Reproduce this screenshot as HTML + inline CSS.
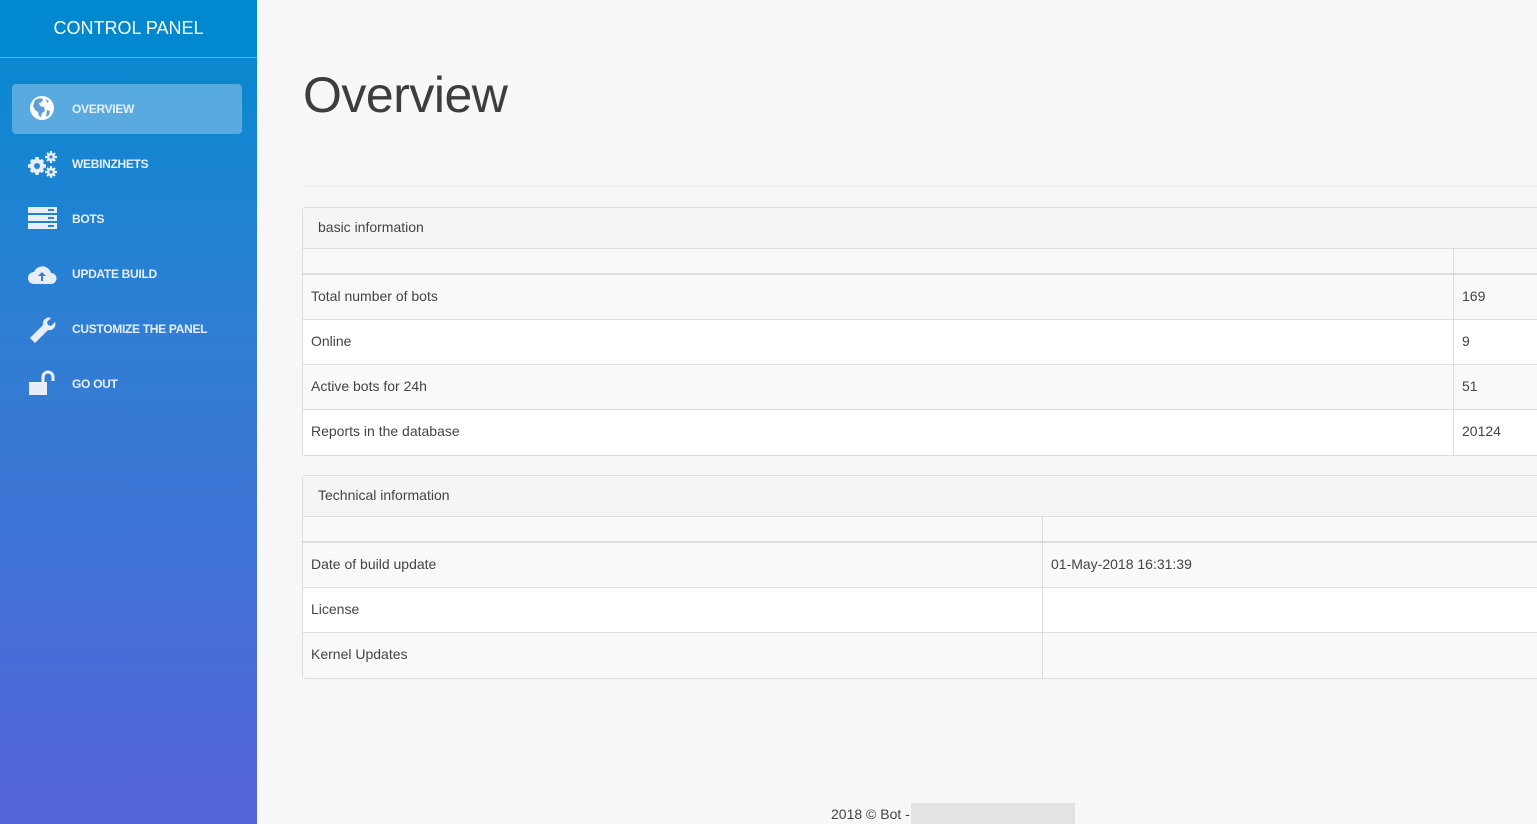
<!DOCTYPE html>
<html><head><meta charset="utf-8"><style>
*{box-sizing:border-box;margin:0;padding:0}
body{width:1537px;height:824px;overflow:hidden;background:#f7f7f9;font-family:"Liberation Sans",Roboto,sans-serif;position:relative}
.sb{position:absolute;left:0;top:0;width:257px;height:824px;background:linear-gradient(#0289cf 0%,#2f7fd4 40%,#5563d8 100%)}
.brand{height:58px;border-bottom:1px solid rgba(255,255,255,.35);color:#fff;font-size:18px;text-align:center;line-height:56px;background:#0288ce}
.nav{position:absolute;left:12px;width:230px;height:50px;border-radius:4px;color:#e8eef8;font-weight:bold;font-size:12px;letter-spacing:-.3px}
.nav.act{background:rgba(255,255,255,.3)}
.nav span{position:absolute;left:60px;top:18px}
.nav svg{position:absolute;left:14px;top:10px}
h1{position:absolute;left:303px;top:66px;font-size:50px;font-weight:normal;color:#3d3d3d;letter-spacing:-.5px}
.hr{position:absolute;left:303px;top:186px;right:0;border-top:1px solid #eaeaea}
.card{position:absolute;left:302px;right:-5px;border:1px solid #ddd;border-radius:3px;background:#fff;color:#444;font-size:14px}
.ch{height:41px;background:#f5f5f5;border-bottom:1px solid #ddd;padding:11px 15px}
.r{display:flex;height:45px;border-bottom:1px solid #ddd;background:#fff}
.r:nth-child(even){background:#f9f9f9}
.r div{padding:13px 8px}
.r div:first-child{border-right:1px solid #ddd}
.r.e{height:26px;border-bottom:2px solid #ddd;background:#f9f9f9}
.r:last-child{border-bottom:none}
.foot{position:absolute;left:831px;top:806px;font-size:14px;color:#444}
.blur{position:absolute;left:911px;top:803px;width:164px;height:21px;background:#e3e3e5}
</style></head><body>
<div class="sb">
<div class="brand">CONTROL PANEL</div>
<div class="nav act" style="top:84px"><svg width="30" height="30" viewBox="0 0 30 30"><circle cx="16" cy="14" r="12" fill="#fff"/><path d="M9 6c3-2 6-2 8-1l-1 3-3 1 1 3 4 1 1 4-3 2-1 4-2-1-1-4-3-2-2-4z M21 16l3 1-1 4-3 2z M20 5l3 2-2 2z" fill="#5f9fd6"/></svg><span>OVERVIEW</span></div>
<div class="nav" style="top:139px"><svg width="34" height="30" viewBox="0 0 34 30"><g fill="#e8eef8"><circle cx="11" cy="17" r="7"/><g stroke="#e8eef8" stroke-width="3.5"><path d="M11 8v18M2 17h18M5 11l12 12M17 11L5 23"/></g><circle cx="25" cy="8" r="4"/><g stroke="#e8eef8" stroke-width="2.2"><path d="M25 2v12M19 8h12M21 4l8 8M29 4l-8 8"/></g><circle cx="25" cy="23" r="4"/><g stroke="#e8eef8" stroke-width="2.2"><path d="M25 17v12M19 23h12M21 19l8 8M29 19l-8 8"/></g></g><circle cx="11" cy="17" r="3" fill="#2a86d2"/><circle cx="25" cy="8" r="1.6" fill="#2a86d2"/><circle cx="25" cy="23" r="1.6" fill="#2a86d2"/></svg><span>WEBINZHETS</span></div>
<div class="nav" style="top:194px"><svg width="32" height="30" viewBox="0 0 32 30"><rect x="2" y="3" width="29" height="6" fill="#e8eef8"/><rect x="2" y="11" width="29" height="6" fill="#e8eef8"/><rect x="2" y="19" width="29" height="6" fill="#e8eef8"/><rect x="22" y="5" width="6" height="2" fill="#2e80d2"/><rect x="22" y="13" width="6" height="2" fill="#2e80d2"/><rect x="22" y="21" width="6" height="2" fill="#2e80d2"/></svg><span>BOTS</span></div>
<div class="nav" style="top:249px"><svg width="32" height="30" viewBox="0 0 32 30"><path d="M8 25a6 6 0 0 1 0-12 9 9 0 0 1 17 1 5.5 5.5 0 0 1 0 11z" fill="#e8eef8"/><path d="M16 13l-4 4h3v5h2v-5h3z" fill="#3a7ad2"/></svg><span>UPDATE BUILD</span></div>
<div class="nav" style="top:304px"><svg width="32" height="30" viewBox="0 0 32 30"><path d="M4 24l13-13a6 6 0 0 1 8-7l-4 4 1 3 3 1 4-4a6 6 0 0 1-7 8l-13 13z" fill="#e8eef8"/></svg><span>CUSTOMIZE THE PANEL</span></div>
<div class="nav" style="top:359px"><svg width="32" height="30" viewBox="0 0 32 30"><rect x="3" y="13" width="18" height="13" fill="#e8eef8"/><path d="M17 13v-5a5 5 0 0 1 10 0v4" stroke="#e8eef8" stroke-width="3" fill="none"/></svg><span>GO OUT</span></div>
</div>
<h1>Overview</h1>
<div class="hr"></div>
<div class="card" style="top:207px">
<div class="ch">basic information</div>
<div>
<div class="r e"><div style="width:1151px"></div><div></div></div>
<div class="r"><div style="width:1151px">Total number of bots</div><div>169</div></div>
<div class="r"><div style="width:1151px">Online</div><div>9</div></div>
<div class="r"><div style="width:1151px">Active bots for 24h</div><div>51</div></div>
<div class="r"><div style="width:1151px">Reports in the database</div><div>20124</div></div>
</div></div>
<div class="card" style="top:475px">
<div class="ch">Technical information</div>
<div>
<div class="r e"><div style="width:740px"></div><div></div></div>
<div class="r"><div style="width:740px">Date of build update</div><div>01-May-2018 16:31:39</div></div>
<div class="r"><div style="width:740px">License</div><div></div></div>
<div class="r"><div style="width:740px">Kernel Updates</div><div></div></div>
</div></div>
<div class="foot">2018 © Bot -</div>
<div class="blur"></div>
</body></html>
